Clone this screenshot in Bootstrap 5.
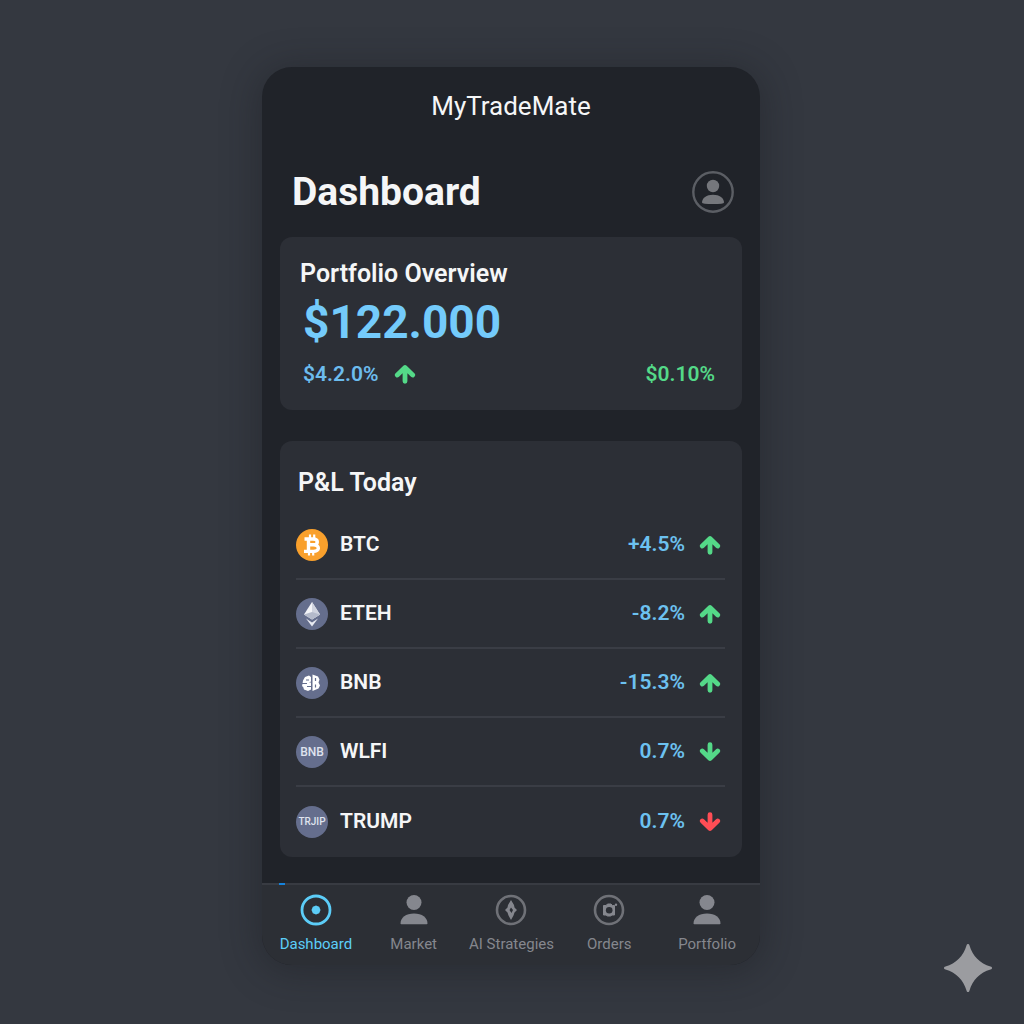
<!DOCTYPE html>
<html lang="en">
<head>
<meta charset="utf-8">
<meta name="viewport" content="width=device-width, initial-scale=1">
<title>MyTradeMate</title>
<link href="https://cdn.jsdelivr.net/npm/bootstrap@5.3.0/dist/css/bootstrap.min.css" rel="stylesheet">
<style>
body{font-family:Roboto,"Liberation Sans",sans-serif;background:#343840;color:#f5f6f7;min-height:100vh}
a{text-decoration:none}
svg{display:block;flex:none}
.stage{padding:67px 10px 60px 8px}
.app-shell{max-width:498px;background:#202329;border-radius:30px;box-shadow:0 4px 36px 4px rgba(24,27,32,.4);overflow:hidden}
.app-title{font-size:26px;line-height:32px;padding-top:23px}
.app-head{padding:46px 26px 21px 30px}
.app-head h1{font-size:39px;line-height:48px;font-weight:700}
.profile-btn{line-height:0}
.panel{background:#2c2f36;border-radius:12px;margin:0 18px}
.panel h2{font-size:25px;line-height:32px;font-weight:600}
.overview{padding:21px 27px 20px 20px}
.balance{font-size:46px;line-height:56px;font-weight:700;color:#74cbfb;padding:4px 0 8px 3px}
.change{font-size:21px;line-height:32px;font-weight:600;color:#6cbcee;padding-left:3px}
.up{color:#54d988}
.down{color:#ff4d55}
.pnl{padding:26px 17px 1px 16px;margin-top:31px}
.pnl h2{padding-left:2px;margin-bottom:12px}
.asset{height:69px;border-bottom:2px solid #3a3d45;gap:12px;padding-right:4px}
.asset:last-child{border-bottom:0}
.asset-name{font-size:21px;font-weight:600}
.asset-move{font-size:21px;font-weight:600;color:#6cc1f0;gap:14px}
.coin{width:32px;height:32px;border-radius:50%;background:#656e8d;font-weight:500;color:#dfe3ee;flex:none}
.coin-btc{background:#f9a02c}
.coin-3{font-size:12px}
.coin-5{font-size:10px}
.tabs{margin-top:26px;background:#2c2f35;border-top:2px solid #383b42;padding:0 4px 0 5px}
.tabs a{flex:1 1 0;color:#85878e;font-size:15px;line-height:20px;padding:9px 0 11px;gap:8px;white-space:nowrap;position:relative}
.tabs a.active{color:#5ccdf8}
.tabs a.active::before{content:"";position:absolute;left:12px;top:-2px;width:6px;height:2px;background:#1683dc}
.spark{position:fixed;right:32px;bottom:32px;color:#9b9ca0}
</style>
<script src="https://cdn.jsdelivr.net/npm/bootstrap@5.3.0/dist/js/bootstrap.bundle.min.js"></script>
</head>
<body>
<svg class="d-none" aria-hidden="true">
  <symbol id="arrow" viewBox="0 0 22 22"><path d="M11 18.300V5M3.300 12 11 4.500l7.700 7.500" fill="none" stroke="currentColor" stroke-width="4.800" stroke-linecap="round" stroke-linejoin="round"/></symbol>
  <symbol id="person" viewBox="0 0 32 32"><circle cx="16" cy="8.500" r="7.500"/><path d="M2.500 29.500C2.500 23.500 8 19.500 16 19.500s13.500 4 13.500 10q0 .8-.8.800H3.300q-.8 0-.8-.8z"/></symbol>
</svg>
<div class="stage">
<div class="app-shell mx-auto">
  <header>
    <div class="app-title text-center">MyTradeMate</div>
    <div class="app-head d-flex justify-content-between align-items-center">
      <h1 class="m-0">Dashboard</h1>
      <button class="profile-btn border-0 bg-transparent p-0" type="button" aria-label="Profile">
        <svg width="42" height="42" viewBox="0 0 42 42"><circle cx="21" cy="21" r="19.700" fill="none" stroke="#5b5e64" stroke-width="2.400"/><circle cx="21" cy="15" r="6.200" fill="#75777c"/><path d="M10 31.500C10 27 14.500 23.700 21 23.700S32 27 32 31.500q0 1.500-11 1.500t-11-1.500z" fill="#75777c"/></svg>
      </button>
    </div>
  </header>
  <main>
    <section class="panel overview">
      <h2 class="m-0">Portfolio Overview</h2>
      <div class="balance">$122.000</div>
      <div class="change d-flex justify-content-between align-items-center">
        <div class="d-flex align-items-center gap-3"><span>$4.2.0%</span><svg class="up" width="22" height="22"><use href="#arrow"/></svg></div>
        <span class="up">$0.10%</span>
      </div>
    </section>
    <section class="panel pnl">
      <h2>P&amp;L Today</h2>
      <ul class="list-unstyled m-0">
        <li class="asset d-flex align-items-center">
          <span class="coin coin-btc d-flex align-items-center justify-content-center">
            <svg width="32" height="32" viewBox="0 0 32 32" fill="none" stroke="#fff"><path d="M8.500 10h8.300c6 0 6 5.800 0 5.800h-3 3.600c6.800 0 6.400 6.600 0 6.600H8M12.500 10v12" stroke-width="3.400" stroke-linejoin="round"/><path d="M14 5.500v4M18.200 5.500v4M13 22.500v4M17.200 22.500v4" stroke-width="2.200"/></svg>
          </span>
          <span class="asset-name">BTC</span>
          <span class="asset-move ms-auto d-flex align-items-center">+4.5%<svg class="up" width="22" height="22"><use href="#arrow"/></svg></span>
        </li>
        <li class="asset d-flex align-items-center">
          <span class="coin d-flex align-items-center justify-content-center">
            <svg width="32" height="32" viewBox="0 0 32 32"><path d="M16 4 8 16.500l8 5 8-5z" fill="#f3f4f8"/><path d="M16 4v17.500l8-5z" fill="#cfd3df"/><path d="m8 16.500 8-2.500 8 2.500-8 5z" fill="#b4bacb"/><path d="m10 20.500 6 4 6-4-6 8z" fill="#e8eaf1"/></svg>
          </span>
          <span class="asset-name">ETEH</span>
          <span class="asset-move ms-auto d-flex align-items-center">-8.2%<svg class="up" width="22" height="22"><use href="#arrow"/></svg></span>
        </li>
        <li class="asset d-flex align-items-center">
          <span class="coin d-flex align-items-center justify-content-center">
            <svg width="32" height="32" viewBox="0 0 32 32"><path d="M9 10l4-1.500 2 1.500v4.500l-2 1h2v7l-3 1.500-4-1.500-1-3H6l1-6z" fill="#fff"/><path d="M6 16.500h5M10 13h3M11 19.500h4" stroke="#656e8d" stroke-width="1"/><path d="M16.500 7.500l5.500 2 1.500 3-1 3 1.500 3-1.500 3-6 2.500z" fill="#fff"/><path d="M19.500 11v3M19.500 17.500v3" stroke="#656e8d" stroke-width="1.200"/></svg>
          </span>
          <span class="asset-name">BNB</span>
          <span class="asset-move ms-auto d-flex align-items-center">-15.3%<svg class="up" width="22" height="22"><use href="#arrow"/></svg></span>
        </li>
        <li class="asset d-flex align-items-center">
          <span class="coin coin-3 d-flex align-items-center justify-content-center">BNB</span>
          <span class="asset-name">WLFI</span>
          <span class="asset-move ms-auto d-flex align-items-center">0.7%<svg class="up" width="22" height="22"><use href="#arrow" transform="rotate(180 11 11)"/></svg></span>
        </li>
        <li class="asset d-flex align-items-center">
          <span class="coin coin-5 d-flex align-items-center justify-content-center">TRJIP</span>
          <span class="asset-name">TRUMP</span>
          <span class="asset-move ms-auto d-flex align-items-center">0.7%<svg class="down" width="22" height="22"><use href="#arrow" transform="rotate(180 11 11)"/></svg></span>
        </li>
      </ul>
    </section>
  </main>
  <nav class="tabs d-flex" aria-label="Main">
    <a class="active d-flex flex-column align-items-center" href="#" aria-current="page"><svg width="32" height="32" viewBox="0 0 32 32"><circle cx="16" cy="16" r="14" fill="none" stroke="currentColor" stroke-width="2.800"/><path d="M16 11.500l3.200 1.300 1.300 3.200-1.300 3.200-3.200 1.300-3.200-1.300-1.300-3.200 1.300-3.200z" fill="currentColor"/></svg>Dashboard</a>
    <a class="d-flex flex-column align-items-center" href="#"><svg width="32" height="32" fill="currentColor"><use href="#person"/></svg>Market</a>
    <a class="d-flex flex-column align-items-center" href="#"><svg width="32" height="32" viewBox="0 0 32 32"><circle cx="16" cy="16" r="14" fill="none" stroke="#6f7177" stroke-width="2.600"/><path fill="currentColor" fill-rule="evenodd" d="M16 6l3 5 .5 2.500L22 16l-2.500 2.500-1 3L16 26l-2.500-4.500-1-3L10 16l2.500-2.500.5-2.500zM16 13.500l-1.500 2.500 2 3 1.500-3z"/></svg>AI Strategies</a>
    <a class="d-flex flex-column align-items-center" href="#"><svg width="32" height="32" viewBox="0 0 32 32"><circle cx="16" cy="16" r="14" fill="none" stroke="#6f7177" stroke-width="2.600"/><path d="M10.500 11.500h2.500l1.500-1.500h3.500l1.500 1.500h2v9.500h-2.500l-1.500 1h-3l-1.500-1h-2.500z" fill="currentColor" stroke="currentColor" stroke-width="1" stroke-linejoin="round"/><circle cx="16.200" cy="16.200" r="3.300" fill="#2c2f35"/><circle cx="23" cy="10.800" r="1.200" fill="currentColor"/></svg>Orders</a>
    <a class="d-flex flex-column align-items-center" href="#"><svg width="32" height="32" fill="currentColor"><use href="#person"/></svg>Portfolio</a>
  </nav>
</div>
</div>
<svg class="spark" width="48" height="48" viewBox="0 0 48 48" fill="currentColor" aria-hidden="true"><path d="M24 0c.8 0 1.200.5 1.500 1.500C28.500 12 36 19.500 46.500 22.500c1 .3 1.500.7 1.500 1.500s-.5 1.200-1.500 1.500C36 28.500 28.500 36 25.500 46.500c-.3 1-.7 1.500-1.500 1.500s-1.200-.5-1.500-1.500C19.500 36 12 28.500 1.500 25.500.5 25.200 0 24.800 0 24s.5-1.200 1.500-1.500C12 19.500 19.500 12 22.500 1.500 22.800.5 23.200 0 24 0z"/></svg>
</body>
</html>
